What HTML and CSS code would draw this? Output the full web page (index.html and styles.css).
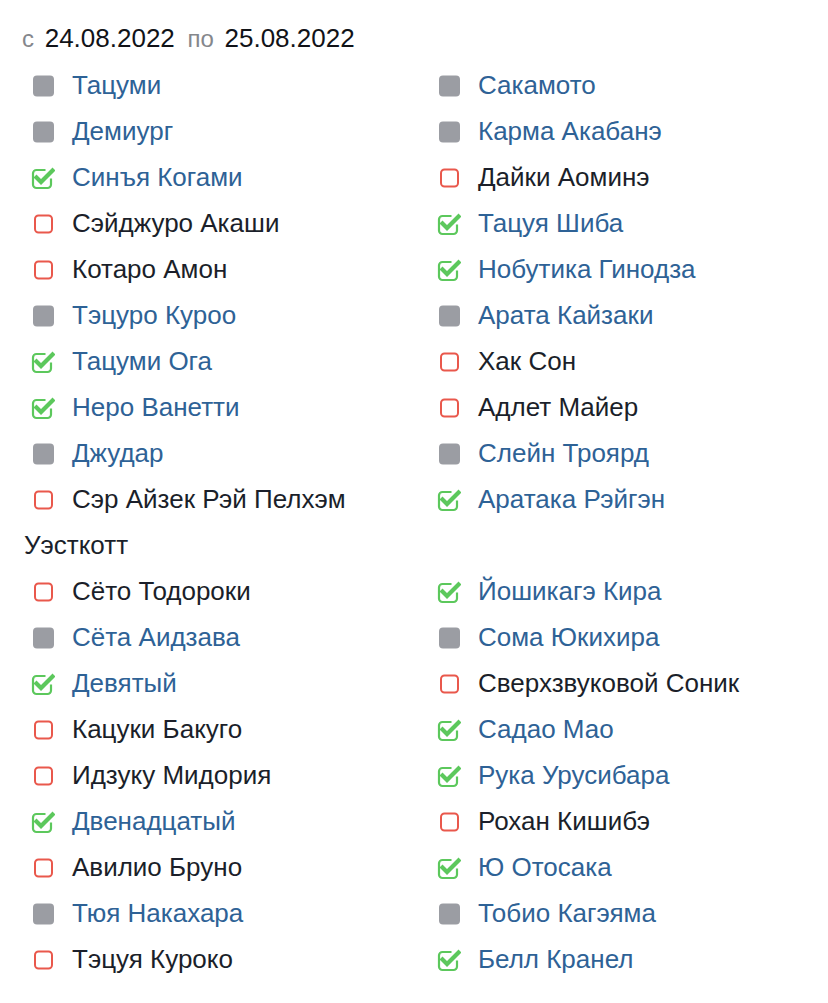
FILE: index.html
```html
<!DOCTYPE html>
<html>
<head>
<meta charset="utf-8">
<link rel="stylesheet" href="styles.css">
</head>
<body>
<svg width="0" height="0" class="defs">
  <defs>
    <symbol id="i-gray" viewBox="0 0 24 24"><rect x="2" y="1.5" width="21" height="21" rx="4" fill="#9b9da3"/></symbol>
    <symbol id="i-red" viewBox="0 0 24 24"><rect x="4" y="3.5" width="17" height="17" rx="3.5" fill="none" stroke="#e9584c" stroke-width="2"/></symbol>
    <symbol id="i-green" viewBox="0 0 24 24"><path d="M20 12.5 V18.5 a3.5 3.5 0 0 1 -3.5 3.5 H5.5 a3.5 3.5 0 0 1 -3.5 -3.5 V7.5 a3.5 3.5 0 0 1 3.5 -3.5 H14.5" fill="none" stroke="#5cc85c" stroke-width="2.2"/><path d="M5.5 11.5 L10 16 L21.5 4.5" fill="none" stroke="#5cc85c" stroke-width="4.2" stroke-linecap="square"/></symbol>
  </defs>
</svg>
<div class="page">
  <div class="range"><span class="muted pre">с</span> <span class="date first">24.08.2022</span> <span class="muted pre">по</span> <span class="date">25.08.2022</span></div>
  <div class="list">
    <div class="item on"><svg class="ic"><use href="#i-gray"/></svg>Тацуми</div>
    <div class="item on"><svg class="ic"><use href="#i-gray"/></svg>Сакамото</div>
    <div class="item on"><svg class="ic"><use href="#i-gray"/></svg>Демиург</div>
    <div class="item on"><svg class="ic"><use href="#i-gray"/></svg>Карма Акабанэ</div>
    <div class="item on"><svg class="ic"><use href="#i-green"/></svg>Синъя Когами</div>
    <div class="item"><svg class="ic"><use href="#i-red"/></svg>Дайки Аоминэ</div>
    <div class="item"><svg class="ic"><use href="#i-red"/></svg>Сэйджуро Акаши</div>
    <div class="item on"><svg class="ic"><use href="#i-green"/></svg>Тацуя Шиба</div>
    <div class="item"><svg class="ic"><use href="#i-red"/></svg>Котаро Амон</div>
    <div class="item on"><svg class="ic"><use href="#i-green"/></svg>Нобутика Гинодза</div>
    <div class="item on"><svg class="ic"><use href="#i-gray"/></svg>Тэцуро Куроо</div>
    <div class="item on"><svg class="ic"><use href="#i-gray"/></svg>Арата Кайзаки</div>
    <div class="item on"><svg class="ic"><use href="#i-green"/></svg>Тацуми Ога</div>
    <div class="item"><svg class="ic"><use href="#i-red"/></svg>Хак Сон</div>
    <div class="item on"><svg class="ic"><use href="#i-green"/></svg>Неро Ванетти</div>
    <div class="item"><svg class="ic"><use href="#i-red"/></svg>Адлет Майер</div>
    <div class="item on"><svg class="ic"><use href="#i-gray"/></svg>Джудар</div>
    <div class="item on"><svg class="ic"><use href="#i-gray"/></svg>Слейн Троярд</div>
    <div class="item"><svg class="ic"><use href="#i-red"/></svg>Сэр Айзек Рэй Пелхэм Уэсткотт</div>
    <div class="item on"><svg class="ic"><use href="#i-green"/></svg>Аратака Рэйгэн</div>
    <div class="item"><svg class="ic"><use href="#i-red"/></svg>Сёто Тодороки</div>
    <div class="item on"><svg class="ic"><use href="#i-green"/></svg>Йошикагэ Кира</div>
    <div class="item on"><svg class="ic"><use href="#i-gray"/></svg>Сёта Аидзава</div>
    <div class="item on"><svg class="ic"><use href="#i-gray"/></svg>Сома Юкихира</div>
    <div class="item on"><svg class="ic"><use href="#i-green"/></svg>Девятый</div>
    <div class="item"><svg class="ic"><use href="#i-red"/></svg>Сверхзвуковой Соник</div>
    <div class="item"><svg class="ic"><use href="#i-red"/></svg>Кацуки Бакуго</div>
    <div class="item on"><svg class="ic"><use href="#i-green"/></svg>Садао Мао</div>
    <div class="item"><svg class="ic"><use href="#i-red"/></svg>Идзуку Мидория</div>
    <div class="item on"><svg class="ic"><use href="#i-green"/></svg>Рука Урусибара</div>
    <div class="item on"><svg class="ic"><use href="#i-green"/></svg>Двенадцатый</div>
    <div class="item"><svg class="ic"><use href="#i-red"/></svg>Рохан Кишибэ</div>
    <div class="item"><svg class="ic"><use href="#i-red"/></svg>Авилио Бруно</div>
    <div class="item on"><svg class="ic"><use href="#i-green"/></svg>Ю Отосака</div>
    <div class="item on"><svg class="ic"><use href="#i-gray"/></svg>Тюя Накахара</div>
    <div class="item on"><svg class="ic"><use href="#i-gray"/></svg>Тобио Кагэяма</div>
    <div class="item"><svg class="ic"><use href="#i-red"/></svg>Тэцуя Куроко</div>
    <div class="item on"><svg class="ic"><use href="#i-green"/></svg>Белл Кранел</div>
  </div>
</div>
</body>
</html>
```
FILE: styles.css
```css
html, body {
  margin: 0;
  padding: 0;
  background: #ffffff;
}
.defs {
  position: absolute;
  width: 0;
  height: 0;
}
.page {
  padding: 15px 0 0 22px;
  font-family: "Liberation Sans", Arial, sans-serif;
  font-size: 24px;
  color: #1b1f2a;
}
.range {
  line-height: 46px;
}
.muted {
  color: #85878c;
}
.date {
  font-size: 26px;
  color: #111318;
}
.pre {
  margin-right: 4px;
}
.date.first {
  margin-right: 6px;
}
.list {
  display: grid;
  grid-template-columns: 406px 1fr;
  margin-left: 2px;
  align-items: start;
}
.item {
  font-size: 26px;
  line-height: 46px;
  color: #1b1f2a;
}
.item.on {
  color: #2e6296;
}
.ic {
  width: 24px;
  height: 24px;
  margin: 0 17px 0 7px;
  vertical-align: -4px;
}
```
